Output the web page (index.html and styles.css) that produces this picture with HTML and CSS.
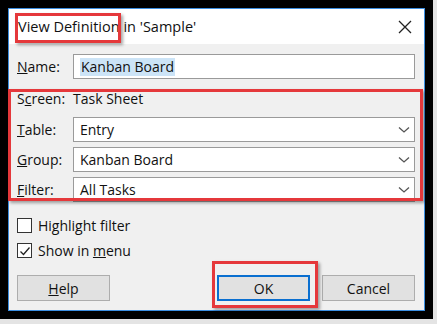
FILE: index.html
```html
<!DOCTYPE html>
<html>
<head>
<meta charset="utf-8">
<link rel="stylesheet" href="styles.css">
</head>
<body>
<div class="page">
  <div class="frame">
    <div class="dialog">
      <div class="titlebar">
        <span class="title">View Definition in 'Sample'</span>
        <svg class="close" width="14" height="14" viewBox="0 0 14 14"><path d="M1 1 L13 13 M13 1 L1 13" stroke="#222" stroke-width="1.3" fill="none"/></svg>
      </div>
      <div class="body">
        <div class="row name-row">
          <span class="label"><u>N</u>ame:</span>
          <div class="input"><span class="sel">Kanban Board</span></div>
        </div>
        <div class="group">
          <div class="row screen-row">
            <span class="label">S<u>c</u>reen:</span>
            <span class="value">Task Sheet</span>
          </div>
          <div class="row">
            <span class="label"><u>T</u>able:</span>
            <div class="select"><span>Entry</span><svg class="chev" width="12" height="8" viewBox="0 0 12 8"><path d="M1 1.5 L6 6 L11 1.5" stroke="#555" stroke-width="1.3" fill="none"/></svg></div>
          </div>
          <div class="row">
            <span class="label"><u>G</u>roup:</span>
            <div class="select"><span>Kanban Board</span><svg class="chev" width="12" height="8" viewBox="0 0 12 8"><path d="M1 1.5 L6 6 L11 1.5" stroke="#555" stroke-width="1.3" fill="none"/></svg></div>
          </div>
          <div class="row">
            <span class="label"><u>F</u>ilter:</span>
            <div class="select"><span>All Tasks</span><svg class="chev" width="12" height="8" viewBox="0 0 12 8"><path d="M1 1.5 L6 6 L11 1.5" stroke="#555" stroke-width="1.3" fill="none"/></svg></div>
          </div>
        </div>
        <div class="checks">
          <label class="check"><span class="box"></span><span>Hi<u>g</u>hlight filter</span></label>
          <label class="check"><span class="box"><svg width="12" height="12" viewBox="0 0 12 12"><path d="M1.5 6.5 L4.5 9.5 L10.5 2.5" stroke="#222" stroke-width="1.3" fill="none"/></svg></span><span>Show in <u>m</u>enu</span></label>
        </div>
        <div class="buttons">
          <button class="btn"><u>H</u>elp</button>
          <span class="spacer"></span>
          <button class="btn ok">OK</button>
          <button class="btn">Cancel</button>
        </div>
      </div>
    </div>
    <div class="mark mark-title"></div>
    <div class="mark mark-group"></div>
    <div class="mark mark-ok"></div>
  </div>
</div>
</body>
</html>
```
FILE: styles.css
```css
* { box-sizing: border-box; }
html, body { margin: 0; padding: 0; }
body {
  width: 437px; height: 324px; overflow: hidden;
  background: #e4e4e4;
  font-family: "Open Sans", "Noto Sans", sans-serif;
  font-size: 14px; color: #111;
}
.page { padding: 0; }
.frame {
  position: relative;
  width: 433px; height: 319px;
  background: #000;
  padding: 8px 0 0 8px;
}
.dialog {
  width: 417px; height: 303px;
  border: 1px solid #3c8ee0;
  background: #f0f0f0;
  display: flex; flex-direction: column;
}
.titlebar {
  height: 35px; background: #fff;
  display: flex; align-items: center;
  padding: 0 12px 0 9px;
}
.title { flex: 1; font-size: 14.5px; color: #111; }
.close { display: block; }
.body { flex: 1; padding: 10px 9px 0 8px; display: flex; flex-direction: column; }
.row { display: flex; align-items: center; height: 25px; }
.label { width: 56px; flex: none; }
.input, .select {
  flex: 1; height: 25px; background: #fff;
  border: 1px solid #9a9a9a;
  display: flex; align-items: center; padding: 0 6px;
}
.sel { background: #cce4f7; padding: 0 1px; line-height: 18px; }
.group { margin-top: 9px; padding-top: 1px; }
.screen-row { height: 18px; margin-bottom: 10px; }
.group .row + .row { margin-top: 5px; }
.select { justify-content: space-between; padding-right: 4px; }
.checks { margin-top: 16px; display: flex; flex-direction: column; gap: 10px; }
.check { display: flex; align-items: center; height: 15px; }
.box {
  width: 15px; height: 15px; border: 1px solid #333; background: #fff;
  margin-right: 6px; display: flex; align-items: center; justify-content: center;
}
.box svg { display: block; }
.buttons { margin-top: 17px; display: flex; align-items: center; }
.btn {
  font-family: inherit; font-size: 14px; color: #111;
  width: 93px; height: 26px;
  background: #e1e1e1; border: 1px solid #adadad;
  padding: 0;
}
.spacer { flex: 1; }
.ok { border: 2px solid #0a6fd0; margin-right: 12px; }
.mark {
  position: absolute;
  border: 3px solid #e5383b;
  box-shadow: 2px 2px 3px rgba(0,0,0,0.35);
}
.mark-title { left: 15px; top: 13px; width: 106px; height: 30px; }
.mark-group { left: 8px; top: 89px; width: 415px; height: 112px; }
.mark-ok { left: 212px; top: 261px; width: 106px; height: 47px; }
```
